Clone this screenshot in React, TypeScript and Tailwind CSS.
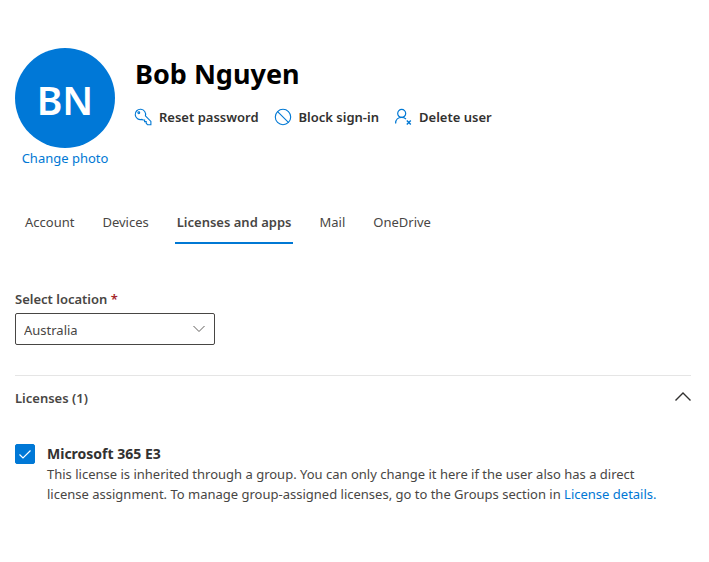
import { useState } from "react";
import type { ReactNode } from "react";

const TABS = ["Account", "Devices", "Licenses and apps", "Mail", "OneDrive"];
const LOCATIONS = ["Australia", "Canada", "New Zealand", "United Kingdom", "United States"];

function KeyIcon() {
  return (
    <svg viewBox="0 0 16 16" className="h-4 w-4 overflow-visible" fill="none" stroke="#0078d4" strokeWidth="1.1" aria-hidden="true">
      <path d="M10.4 6.9A5.2 5.2 0 1 0 6.9 10.4L8 11H9.6V12.6H11.2V14.2L12.6 15.8H15.9V12.4L10.4 6.9Z" />
      <circle cx="3.8" cy="3.8" r="0.9" />
    </svg>
  );
}

function BlockIcon() {
  return (
    <svg viewBox="0 0 16 16" className="h-4 w-4 overflow-visible" fill="none" stroke="#0078d4" strokeWidth="1.1" aria-hidden="true">
      <circle cx="8" cy="8" r="7.7" />
      <path d="M2.6 2.6L13.4 13.4" />
    </svg>
  );
}

function UserRemoveIcon() {
  return (
    <svg viewBox="0 0 16 16" className="h-4 w-4 overflow-visible" fill="none" stroke="#0078d4" strokeWidth="1.2" aria-hidden="true">
      <circle cx="6.7" cy="4.4" r="4" />
      <path d="M0.6 14.4C0.6 10.8 3.2 8.4 6.7 8.4C8.5 8.4 9.9 9 11 10" />
      <path d="M11.8 11.6L15.8 15.6M15.8 11.6L11.8 15.6" strokeWidth="1.4" />
    </svg>
  );
}

function Action({ icon, label }: { icon: ReactNode; label: string }) {
  return (
    <button type="button" className="flex items-center gap-2 text-[13px] leading-5 font-semibold text-[#323130]">
      {icon}
      {label}
    </button>
  );
}

export default function App() {
  const [tab, setTab] = useState("Licenses and apps");
  const [open, setOpen] = useState(true);
  const [assigned, setAssigned] = useState(true);

  return (
    <main className="min-h-screen bg-white pt-12 pr-[18px] pb-12 pl-[15px] font-['Noto_Sans','Open_Sans',sans-serif] text-[13px] leading-5 text-[#484644]">
      <header className="flex gap-5">
        <div className="flex w-[100px] shrink-0 flex-col items-center">
          <div className="flex h-[100px] w-[100px] items-center justify-center rounded-full bg-[#0078d7] pt-1 text-[39px] font-semibold text-white">
            BN
          </div>
          <a href="#photo" className="whitespace-nowrap text-[#0078d4]">
            Change photo
          </a>
        </div>
        <div className="pt-2">
          <h1 className="text-[27px] leading-9 font-bold text-black">Bob Nguyen</h1>
          <div className="mt-[15px] flex gap-4">
            <Action icon={<KeyIcon />} label="Reset password" />
            <Action icon={<BlockIcon />} label="Block sign-in" />
            <Action icon={<UserRemoveIcon />} label="Delete user" />
          </div>
        </div>
      </header>

      <div role="tablist" className="mt-8 flex gap-6 pl-2">
        {TABS.map((name) => (
          <button
            key={name}
            type="button"
            role="tab"
            aria-selected={tab === name}
            onClick={() => setTab(name)}
            className={
              tab === name
                ? "h-11 border-b-2 border-[#0078d4] px-0.5 pt-0.5 font-semibold"
                : "h-11 border-b-2 border-transparent px-0.5 pt-0.5"
            }
          >
            {name}
          </button>
        ))}
      </div>

      <div className="mt-[45px]">
        <label htmlFor="location" className="block font-semibold">
          Select location <span className="text-[#a4262c]">*</span>
        </label>
        <div className="mt-1 grid w-[200px] items-center">
          <select
            id="location"
            className="col-start-1 row-start-1 h-8 w-full appearance-none rounded-xs border border-[#484644] bg-white px-2 pt-0.5"
          >
            {LOCATIONS.map((l) => (
              <option key={l}>{l}</option>
            ))}
          </select>
          <svg
            viewBox="0 0 12 8"
            className="pointer-events-none col-start-1 row-start-1 mr-2.5 h-2 w-3 justify-self-end"
            fill="none"
            stroke="#605e5c"
            aria-hidden="true"
          >
            <path d="M0.5 1L6 6.5L11.5 1" />
          </svg>
        </div>
      </div>

      <section className="mt-[30px] border-t border-[#e5e5e5]">
        <button
          type="button"
          aria-expanded={open}
          onClick={() => setOpen(!open)}
          className="flex h-11 w-full items-center justify-between font-semibold"
        >
          Licenses (1)
          <svg
            viewBox="0 0 16 12"
            className={open ? "h-3 w-4" : "h-3 w-4 rotate-180"}
            fill="none"
            stroke="#323130"
            strokeWidth="1.4"
            aria-hidden="true"
          >
            <path d="M0.5 8.5L8 1L15.5 8.5" />
          </svg>
        </button>

        {open && (
          <div className="mt-6 flex gap-3">
            <div className="grid h-5 w-5 shrink-0 place-items-center">
              <input
                id="m365-e3"
                type="checkbox"
                checked={assigned}
                onChange={(e) => setAssigned(e.target.checked)}
                className="col-start-1 row-start-1 h-5 w-5 appearance-none rounded-xs border border-[#323130] bg-white checked:border-[#0078d4] checked:bg-[#0078d7]"
              />
              {assigned && (
                <svg
                  viewBox="0 0 12 9"
                  className="pointer-events-none col-start-1 row-start-1 h-[9px] w-3"
                  fill="none"
                  stroke="#fff"
                  strokeWidth="1.2"
                  aria-hidden="true"
                >
                  <path d="M0.5 4.5L4 8L11.5 0.5" />
                </svg>
              )}
            </div>
            <div>
              <label htmlFor="m365-e3" className="block text-sm leading-5 font-bold text-[#323130]">
                Microsoft 365 E3
              </label>
              <p className="max-w-[620px]">
                This license is inherited through a group. You can only change it here if the user also has a direct
                license assignment. To manage group-assigned licenses, go to the Groups section in{" "}
                <a href="#license-details" className="text-[#0078d4]">
                  License details.
                </a>
              </p>
            </div>
          </div>
        )}
      </section>
    </main>
  );
}
